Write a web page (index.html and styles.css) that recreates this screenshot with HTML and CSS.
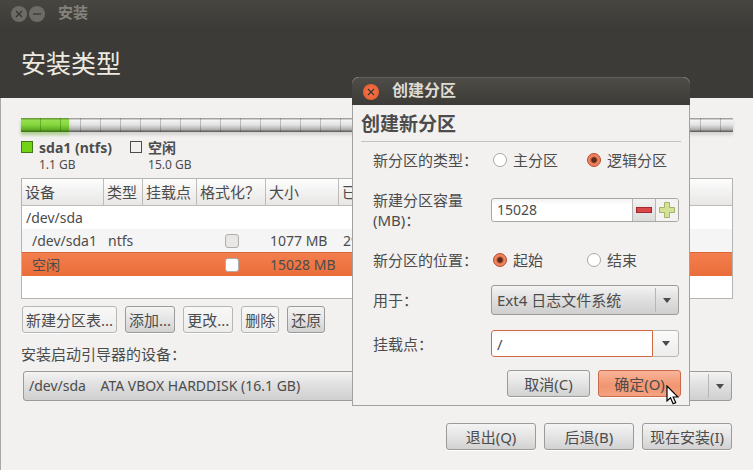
FILE: index.html
```html
<!DOCTYPE html>
<html lang="zh-CN">
<head>
    <meta charset="UTF-8">
    <meta name="viewport" content="width=device-width, initial-scale=1.0">
    <title>安装</title>
    <link rel="stylesheet" href="styles.css">
</head>
<body>
    <main class="window">
        <header class="window-header">
            <div class="titlebar">
                <button class="win-btn" type="button" aria-label="关闭">
                    <svg viewBox="0 0 16 16"><path d="M5 5l6 6M11 5l-6 6"/></svg>
                </button>
                <button class="win-btn" type="button" aria-label="最小化">
                    <svg viewBox="0 0 16 16"><path d="M4 8h8"/></svg>
                </button>
                <span class="titlebar-text">安装</span>
            </div>
            <h1>安装类型</h1>
        </header>

        <div class="window-body">
            <div class="disk-bar"><div class="disk-used"></div></div>

            <div class="legend">
                <div class="legend-item">
                    <span class="swatch swatch-used"></span>
                    <div>
                        <div class="legend-name">sda1 (ntfs)</div>
                        <div class="legend-size">1.1 GB</div>
                    </div>
                </div>
                <div class="legend-item">
                    <span class="swatch"></span>
                    <div>
                        <div class="legend-name">空闲</div>
                        <div class="legend-size">15.0 GB</div>
                    </div>
                </div>
            </div>

            <div class="table-box">
                <table>
                    <colgroup>
                        <col class="col-device">
                        <col class="col-type">
                        <col class="col-mount">
                        <col class="col-format">
                        <col class="col-size">
                        <col>
                    </colgroup>
                    <thead>
                        <tr>
                            <th>设备</th>
                            <th>类型</th>
                            <th>挂载点</th>
                            <th class="th-format">格式化？</th>
                            <th>大小</th>
                            <th>已用</th>
                        </tr>
                    </thead>
                    <tbody>
                        <tr>
                            <td colspan="6">/dev/sda</td>
                        </tr>
                        <tr class="alt">
                            <td class="child">/dev/sda1</td>
                            <td>ntfs</td>
                            <td></td>
                            <td class="check"><input type="checkbox" aria-label="格式化 /dev/sda1" disabled></td>
                            <td>1077 MB</td>
                            <td>29 MB</td>
                        </tr>
                        <tr class="selected">
                            <td class="child">空闲</td>
                            <td></td>
                            <td></td>
                            <td class="check"><input type="checkbox" aria-label="格式化 空闲"></td>
                            <td>15028 MB</td>
                            <td></td>
                        </tr>
                    </tbody>
                </table>
            </div>

            <div class="toolbar">
                <button class="btn flat" type="button">新建分区表...</button>
                <button class="btn" type="button">添加...</button>
                <button class="btn flat" type="button">更改...</button>
                <button class="btn flat" type="button">删除</button>
                <button class="btn" type="button">还原</button>
            </div>

            <label class="boot-label" for="boot">安装启动引导器的设备：</label>
            <div class="combo boot-combo">
                <select id="boot" class="latin">
                    <option>/dev/sda &nbsp;&nbsp; ATA VBOX HARDDISK (16.1 GB)</option>
                </select>
                <span class="arrow"><svg viewBox="0 0 8 5"><path d="M0 0h8L4 5z"/></svg></span>
            </div>

            <div class="footer">
                <button class="btn" type="button">退出(Q)</button>
                <button class="btn" type="button">后退(B)</button>
                <button class="btn" type="button">现在安装(I)</button>
            </div>
        </div>
    </main>

    <form class="dialog" role="dialog" aria-labelledby="dialog-title">
        <div class="dialog-titlebar">
            <button class="win-btn close" type="button" aria-label="关闭">
                <svg viewBox="0 0 16 16"><path d="M5 5l6 6M11 5l-6 6"/></svg>
            </button>
            <span id="dialog-title">创建分区</span>
        </div>
        <div class="dialog-body">
            <h2>创建新分区</h2>
            <div class="fields">
                <span>新分区的类型：</span>
                <div class="radios">
                    <label><input type="radio" name="type">主分区</label>
                    <label><input type="radio" name="type" checked>逻辑分区</label>
                </div>

                <label for="size">新建分区容量 (MB)：</label>
                <div class="spin">
                    <input id="size" class="latin" type="text" value="15028">
                    <button type="button" class="minus" aria-label="减少">
                        <svg viewBox="0 0 18 18"><rect x="1.5" y="6.5" width="15" height="5" fill="#d9474b" stroke="#a02a30"/></svg>
                    </button>
                    <button type="button" aria-label="增加">
                        <svg viewBox="0 0 18 18"><path d="M6.5 1.5h5v5h5v5h-5v5h-5v-5h-5v-5h5z" fill="#d3e294" stroke="#a3b56c"/></svg>
                    </button>
                </div>

                <span>新分区的位置：</span>
                <div class="radios">
                    <label><input type="radio" name="place" checked>起始</label>
                    <label><input type="radio" name="place">结束</label>
                </div>

                <label for="fs">用于：</label>
                <div class="combo">
                    <select id="fs">
                        <option>Ext4 日志文件系统</option>
                    </select>
                    <span class="arrow"><svg viewBox="0 0 8 5"><path d="M0 0h8L4 5z"/></svg></span>
                </div>

                <label for="mount">挂载点：</label>
                <div class="entry">
                    <input id="mount" type="text" value="/">
                    <button type="button" aria-label="选择挂载点">
                        <svg viewBox="0 0 8 5"><path d="M0 0h8L4 5z"/></svg>
                    </button>
                </div>
            </div>
            <div class="dialog-actions">
                <button class="btn" type="button">取消(C)</button>
                <button class="btn primary" type="button">确定(O)
                    <svg class="cursor" viewBox="0 0 13 20"><path d="M1 1v15l3.5-3.2 2.6 6 2.6-1.2-2.5-5.6H12z"/></svg>
                </button>
            </div>
        </div>
    </form>
</body>
</html>
```

FILE: styles.css
```css
* {
    box-sizing: border-box;
}
body {
    margin: 0;
    background: #f2f1f0;
    color: #4c4c4c;
    font: 15px/20px "Noto Sans", "Noto Sans CJK SC", sans-serif;
}
button, input, select {
    margin: 0;
    font: inherit;
    color: inherit;
}
.latin {
    font-size: 14px;
}

/* installer window */
.window {
    min-height: 100vh;
    border-left: 1px solid #a9a7a4;
}
.window-header {
    margin-left: -1px;
    height: 98px;
    background: linear-gradient(#474641, #3c3b37 28px);
    color: #eeeae0;
}
.titlebar {
    display: flex;
    align-items: center;
    gap: 2px;
    height: 28px;
    padding-left: 11px;
}
.titlebar-text {
    margin: -4px 0 0 11px;
    color: #85837c;
    font-weight: bold;
}
.win-btn {
    width: 16px;
    height: 16px;
    padding: 0;
    border: 0;
    border-radius: 50%;
    background: #6c6b66;
    display: flex;
}
.win-btn svg {
    width: 100%;
    fill: none;
    stroke: #35342f;
    stroke-width: 1.2;
}
h1 {
    margin: 0;
    padding: 18px 21px;
    font-size: 25px;
    line-height: 34px;
    font-weight: normal;
}
.window-body {
    padding: 20px 20px 0;
}

/* partition bar */
.disk-bar {
    height: 14px;
    background:
        repeating-linear-gradient(90deg, transparent 0 19px, rgba(0, 0, 0, 0.2) 19px 20px),
        linear-gradient(#a4a3a1 1px, #f4f4f4 2px, #e2e2e2 7px, #a8a8a8 12px, #666 13px);
    box-shadow: 0 3px 3px rgba(0, 0, 0, 0.12);
}
.disk-used {
    width: 48px;
    height: 14px;
    background:
        repeating-linear-gradient(90deg, transparent 0 19px, rgba(40, 90, 0, 0.35) 19px 20px),
        linear-gradient(#6aa035 1px, #95e052 2px, #83d63c 7px, #5fa924 12px, #3f7a16 13px);
    box-shadow: 0 3px 3px rgba(110, 200, 40, 0.35);
}
.legend {
    display: flex;
    gap: 18px;
    margin-top: 6px;
}
.legend-item {
    display: flex;
    gap: 6px;
}
.swatch {
    width: 12px;
    height: 12px;
    margin-top: 3px;
    border: 1px solid #4c4c4c;
}
.swatch-used {
    background: #73d216;
    border-color: #3f7a16;
}
.legend-name {
    font-size: 14px;
    font-weight: bold;
}
.legend-size {
    font-size: 12px;
    line-height: 14px;
}

/* partition table */
.table-box {
    height: 121px;
    margin-top: 6px;
    border: 1px solid #b6b4b1;
    background: #fff;
}
table {
    width: 100%;
    table-layout: fixed;
    border-collapse: separate;
    border-spacing: 0;
    font-size: 14px;
}
.col-device { width: 82px; }
.col-type { width: 39px; }
.col-mount { width: 54px; }
.col-format { width: 69px; }
.col-size { width: 73px; }
th {
    height: 27px;
    padding: 0 3px;
    border-right: 1px solid #bebcb9;
    border-bottom: 1px solid #bebcb9;
    background: linear-gradient(#fdfdfd, #e8e7e6);
    font-size: 15px;
    font-weight: normal;
    text-align: left;
    white-space: nowrap;
}
th:last-child {
    border-right: 0;
}
.th-format {
    font-family: "Noto Sans CJK TC", sans-serif;
}
td {
    height: 23px;
    padding: 0 4px;
    white-space: nowrap;
}
td.child {
    padding-left: 10px;
}
.alt td {
    background: #f5f5f5;
}
.selected td {
    height: 24px;
    border-top: 1px solid #d9643a;
    background: linear-gradient(#f47e4e, #e96d3a);
}
td.check {
    text-align: center;
    line-height: 14px;
}
input[type="checkbox"] {
    appearance: none;
    display: inline-block;
    width: 14px;
    height: 14px;
    border: 1px solid #b0aeab;
    border-radius: 3px;
    background: #fff;
    vertical-align: top;
}
input[type="checkbox"]:disabled {
    background: #e8e7e6;
}

/* buttons */
.btn {
    height: 27px;
    padding: 0 3px;
    border: 1px solid #9d9b98;
    border-radius: 3px;
    background: linear-gradient(#f4f4f4, #e4e4e4 50%, #d2d2d2);
    box-shadow: 0 1px 0 #fff;
    white-space: nowrap;
}
.btn.flat {
    border-color: #b8b6b3;
    background: linear-gradient(#f8f8f8, #ececec);
}
.btn.primary {
    border-color: #cb6a49;
    background: linear-gradient(#f8b49a, #f19570 60%, #f3a283);
}
.toolbar {
    display: flex;
    gap: 8px;
    margin: 7px 0 0 1px;
}
.boot-label {
    display: block;
    margin: 11px 0 7px;
}
.combo {
    display: grid;
    height: 30px;
}
.boot-combo {
    margin: 0 1px 0 2px;
}
.combo select {
    grid-area: 1 / 1;
    appearance: none;
    width: 100%;
    padding: 0 5px;
    border: 1px solid #9d9b98;
    border-radius: 3px;
    background: linear-gradient(#f4f4f4, #e2e2e2 40%, #cfcfcf);
}
.arrow {
    grid-area: 1 / 1;
    justify-self: end;
    display: flex;
    align-items: center;
    justify-content: center;
    width: 23px;
    margin: 3px 1px;
    border-left: 1px solid #b8b6b3;
    pointer-events: none;
}
.arrow svg, .entry svg {
    width: 8px;
    height: 5px;
    fill: #4c4c4c;
}
.footer {
    display: flex;
    justify-content: flex-end;
    gap: 8px;
    margin: 22px 1px 0 0;
}
.footer .btn {
    min-width: 90px;
}

/* dialog over the installer */
.dialog {
    position: absolute;
    top: 77px;
    right: 63px;
    width: 338px;
    border-radius: 7px 7px 0 0;
    background: #f2f1f0;
}
.dialog-titlebar {
    display: flex;
    align-items: center;
    gap: 13px;
    height: 28px;
    padding-left: 11px;
    border-top: 1px solid #605f59;
    border-radius: 7px 7px 0 0;
    background: linear-gradient(#4d4c47, #3c3b37);
    color: #dfdbd2;
}
#dialog-title {
    margin-top: -3px;
    font-size: 16px;
    font-weight: bold;
}
.win-btn.close {
    background: radial-gradient(#f4794c, #e4572b);
}
.dialog-body {
    padding: 8px;
    border: 1px solid #a3a19e;
    border-top: 0;
}
h2 {
    margin: 0 0 8px;
    padding-bottom: 5px;
    border-bottom: 1px solid #c4c2bf;
    font-size: 19px;
    line-height: 23px;
}
.fields {
    display: grid;
    grid-template-columns: 118px 1fr;
    grid-template-rows: 20px 50px 20px 30px 27px;
    row-gap: 15px;
    align-items: center;
    padding: 0 2px 0 12px;
}
.radios {
    display: flex;
}
.radios label {
    display: flex;
    align-items: center;
    gap: 6px;
    width: 94px;
    white-space: nowrap;
}
input[type="radio"] {
    appearance: none;
    width: 14px;
    height: 14px;
    margin-left: 2px;
    border: 1px solid #aaa8a5;
    border-radius: 50%;
    background: #fff;
}
input[type="radio"]:checked {
    border-color: #b4482a;
    background: radial-gradient(circle, #5d2a1a 2px, #f0835c 4px);
}
.spin, .entry {
    display: flex;
    height: 27px;
    border-radius: 3px;
    background: linear-gradient(#f4f4f4, #fff 6px);
    overflow: hidden;
}
.spin {
    height: 24px;
    border: 1px solid #a9a7a4;
}
.spin input, .entry input {
    flex: 1;
    min-width: 0;
    padding: 0 5px;
    border: 0;
    background: none;
    outline: 0;
}
.spin button {
    display: flex;
    align-items: center;
    justify-content: center;
    width: 23px;
    padding: 0;
    border: 0;
    border-left: 1px solid #b8b6b3;
    background: #f4f3f2;
}
.spin .minus {
    background: linear-gradient(#f2f2f2, #dcdcdc);
}
.spin svg {
    width: 18px;
    height: 18px;
}
.entry input {
    border: 1px solid #cf6a45;
    border-radius: 3px 0 0 3px;
}
.entry button {
    display: flex;
    align-items: center;
    justify-content: center;
    width: 26px;
    padding: 0;
    border: 1px solid #b8b6b3;
    border-left: 0;
    border-radius: 0 3px 3px 0;
    background: linear-gradient(#fbfbfb, #ececec);
}
.dialog-actions {
    display: flex;
    justify-content: flex-end;
    gap: 8px;
    margin-top: 13px;
}
.dialog-actions .btn {
    position: relative;
    width: 83px;
}
.cursor {
    position: absolute;
    right: 1px;
    bottom: -9px;
    width: 13px;
    height: 20px;
    fill: #fff;
    stroke: #000;
    stroke-width: 1.2;
}
```
